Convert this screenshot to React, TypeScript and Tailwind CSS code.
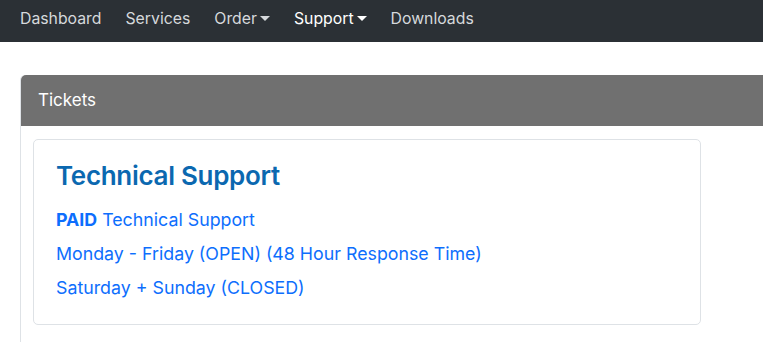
import React from 'react'

const navItems = [
  { label: 'Dashboard' },
  { label: 'Services' },
  { label: 'Order', caret: true },
  { label: 'Support', caret: true, active: true },
  { label: 'Downloads' },
]

const Caret = () => (
  <span className="ml-[3px] inline-block w-0 h-0 border-l-[5px] border-r-[5px] border-t-[5px] border-l-transparent border-r-transparent border-t-current align-[3px]"></span>
)

const App: React.FC = () => {
  return (
    <div className="w-[763px] h-[342px] overflow-hidden bg-white" style={{ fontFamily: 'Inter, "Noto Sans", sans-serif' }}>
      <nav className="h-[42px] bg-[#2b3035] flex items-center px-[20px] pb-[4px] gap-[24px] text-[15.8px]">
        {navItems.map(item => (
          <a
            key={item.label}
            className={item.active ? 'text-white' : 'text-[#d6d9dc]'}
          >
            {item.label}
            {item.caret && <Caret />}
          </a>
        ))}
      </nav>

      <div className="pl-[20px] pt-[33px]">
        <div className="w-[800px] border-l border-[#dee2e6] rounded-tl-[5px]">
          <div className="h-[51px] bg-[#707070] rounded-tl-[5px] flex items-center px-[17px]">
            <span className="text-white text-[17px]">Tickets</span>
          </div>
          <div className="pt-[13px] pl-[12px] pb-[20px]">
            <div className="w-[668px] h-[186px] border border-[#dee2e6] rounded-[5px] px-[22px] pt-[20px]">
              <h2 className="text-[26px] font-semibold text-[#0b68b0] leading-[32px] tracking-[-0.3px]">Technical Support</h2>
              <div className="mt-[16px] flex flex-col gap-[10px] text-[17.8px] leading-[24px] text-[#0d6efd]">
                <p><b className="font-bold">PAID</b> Technical Support</p>
                <p>Monday - Friday (OPEN) (48 Hour Response Time)</p>
                <p>Saturday + Sunday (CLOSED)</p>
              </div>
            </div>
          </div>
        </div>
      </div>
    </div>
  )
}

export default App
